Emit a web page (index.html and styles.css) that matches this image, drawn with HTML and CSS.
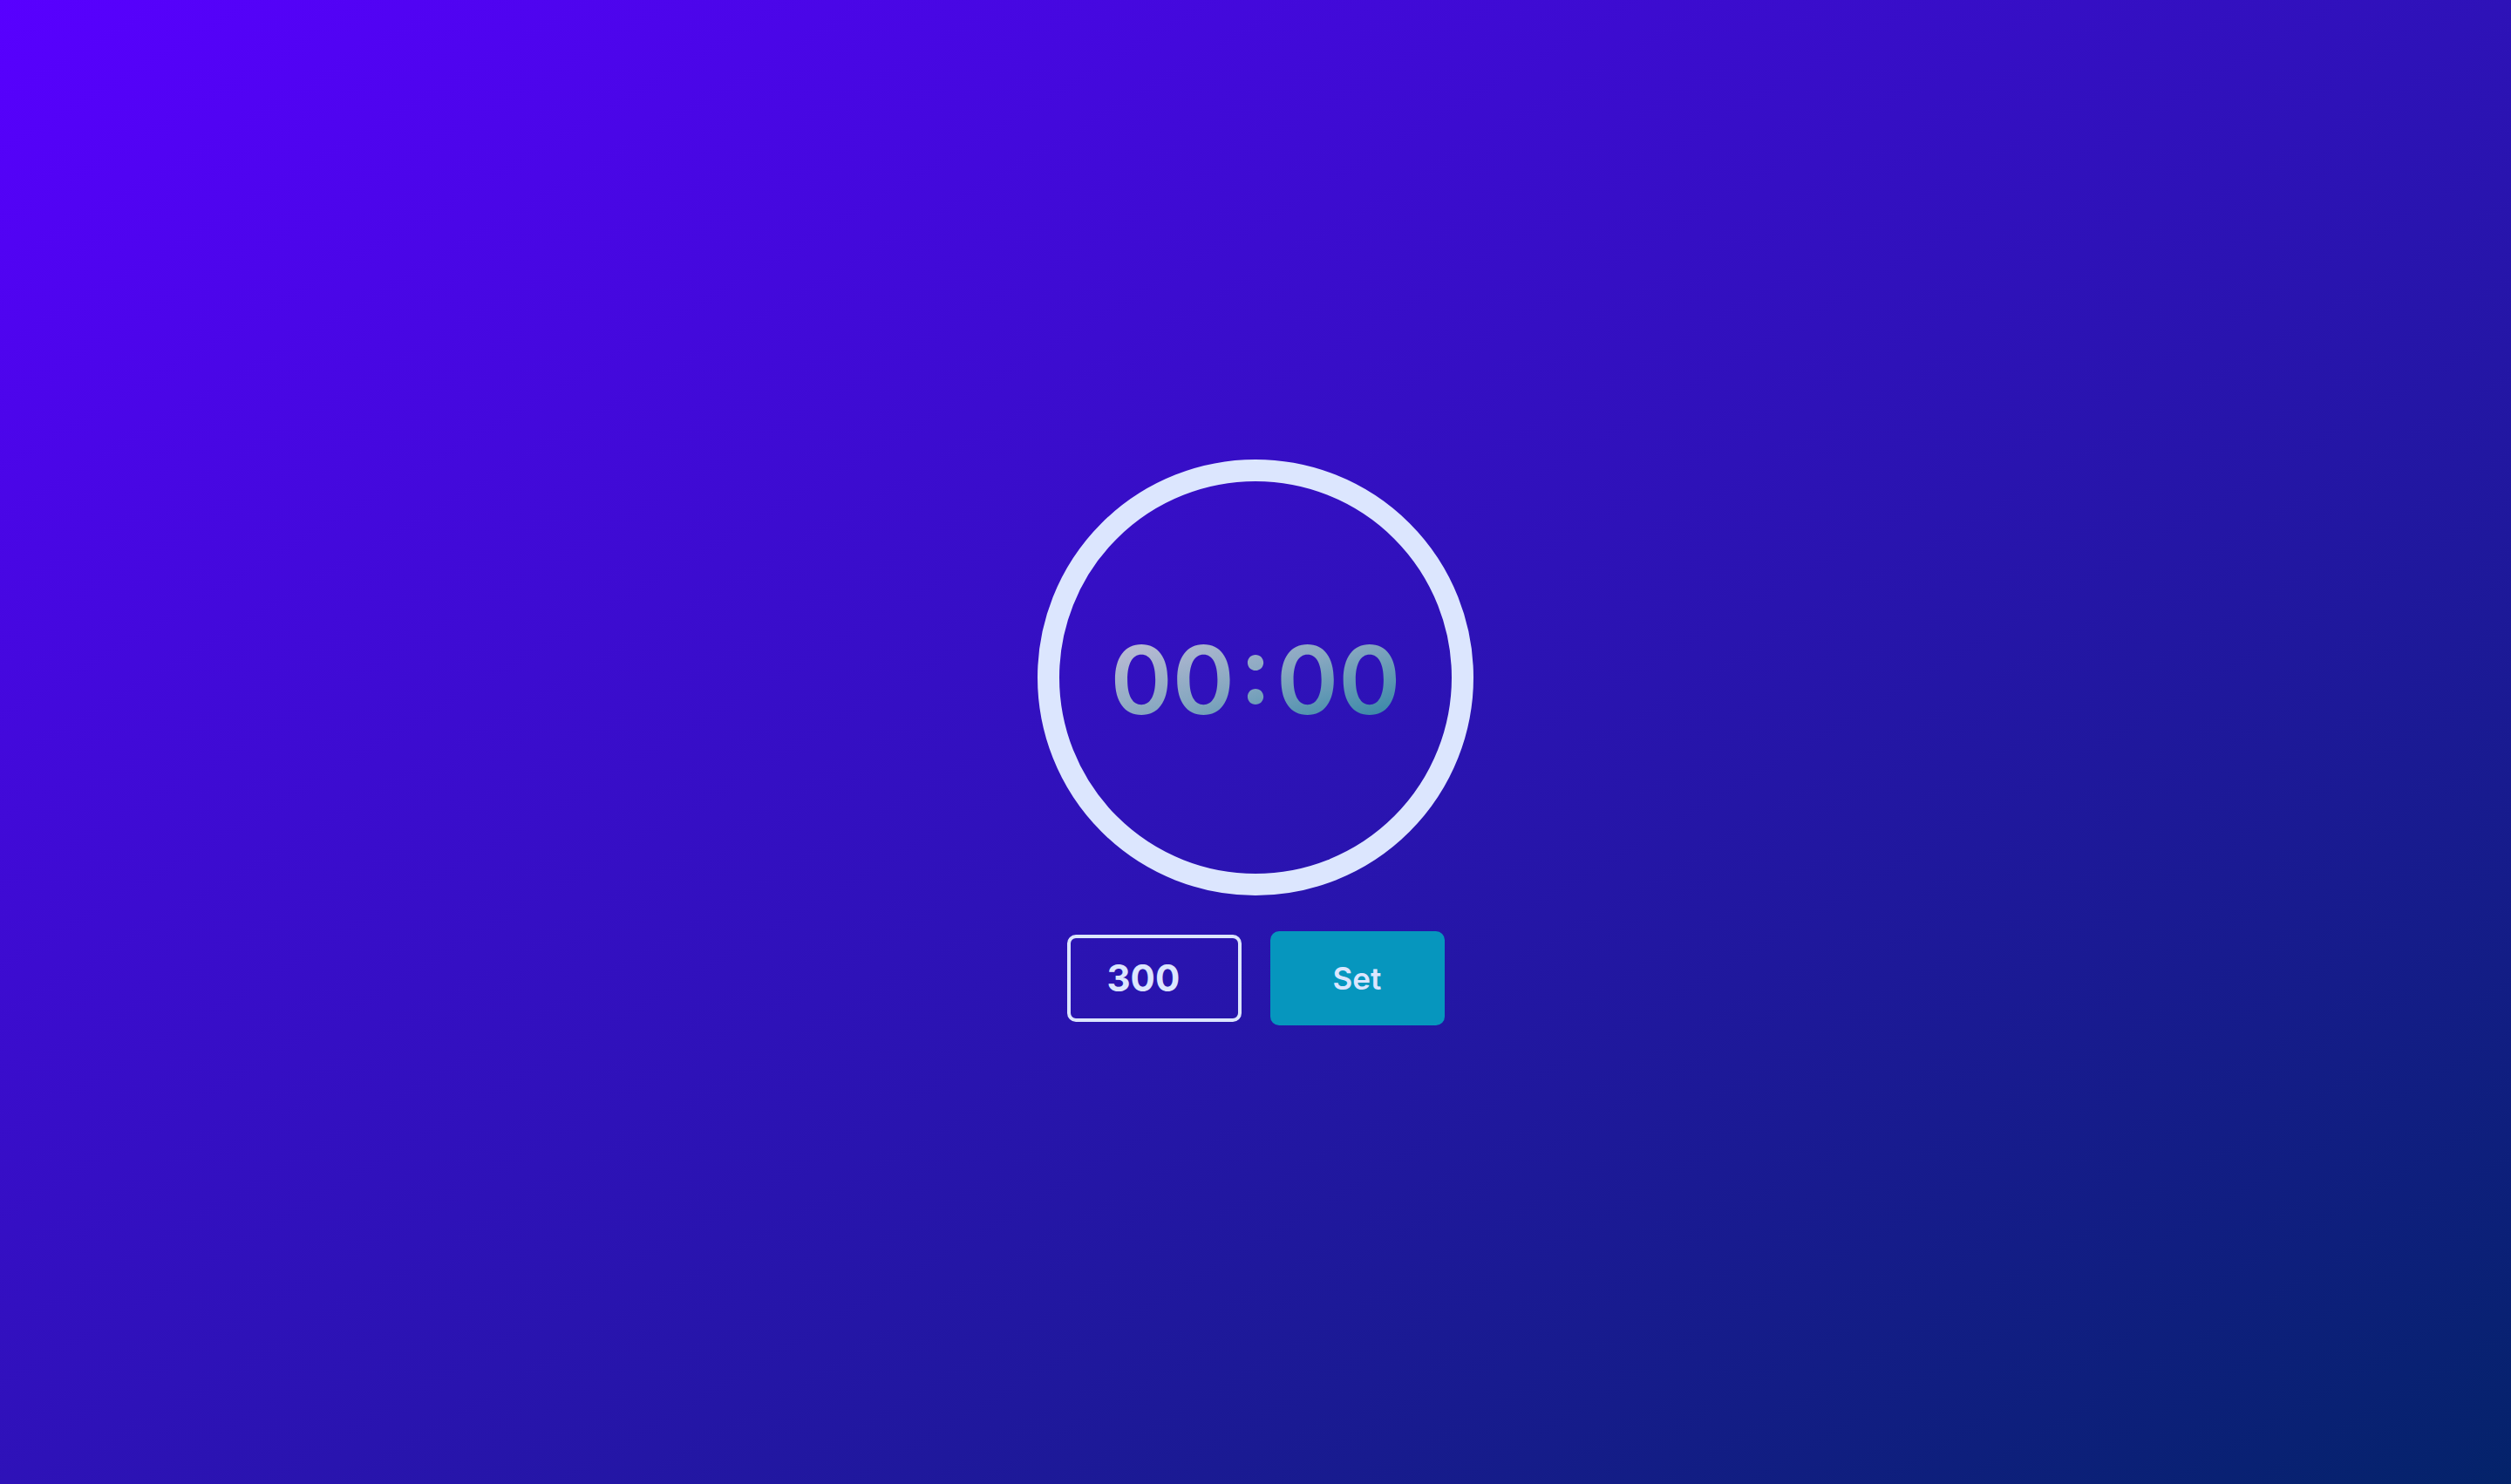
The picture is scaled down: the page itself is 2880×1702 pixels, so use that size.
FILE: index.html
```html
<!DOCTYPE html>
<html lang="en">
<head>
<meta charset="utf-8">
<title>Timer</title>
<link rel="stylesheet" href="styles.css">
</head>
<body>
<main class="timer">
  <div class="ring">
    <div class="time">00<span class="colon">:</span>00</div>
  </div>
  <form class="controls">
    <input class="seconds" type="text" value="300">
    <button class="set" type="button">Set</button>
  </form>
</main>
</body>
</html>
```
FILE: styles.css
```css
html, body {
  margin: 0;
  padding: 0;
  height: 100%;
}
body {
  background: linear-gradient(to bottom right, #5800ff 0%, #2e12b8 50%, #04236a 100%);
  font-family: Inter, "Open Sans", "Liberation Sans", sans-serif;
}
.timer {
  height: 100%;
  display: flex;
  flex-direction: column;
  align-items: center;
  justify-content: center;
  gap: 41px;
}
.ring {
  width: 500px;
  height: 500px;
  box-sizing: border-box;
  border: 25px solid #dce6fe;
  border-radius: 50%;
  display: flex;
  align-items: center;
  justify-content: center;
}
.time {
  font-family: Inter, "Open Sans", sans-serif;
  font-size: 108px;
  font-weight: 600;
  line-height: 1;
  font-feature-settings: "case" 1;
  margin-top: 6px;
  background: linear-gradient(to bottom right, #c6c0d9 0%, #86a7c0 50%, #2a82a3 100%);
  -webkit-background-clip: text;
  background-clip: text;
  color: transparent;
}
.colon {
  margin: 0 6px;
  font-weight: 700;
}
.controls {
  display: flex;
  align-items: center;
  gap: 33px;
  margin: 0;
}
.seconds {
  width: 200px;
  height: 100px;
  box-sizing: border-box;
  border: 4px solid #dce6fe;
  border-radius: 10px;
  background: transparent;
  color: #dce6fe;
  font-family: Inter, "Open Sans", sans-serif;
  font-size: 42px;
  font-weight: 700;
  padding: 0 0 0 42px;
  outline: none;
}
.set {
  width: 200px;
  height: 108px;
  border: none;
  border-radius: 10px;
  background: #0696be;
  color: #dce6fe;
  font-family: Inter, "Open Sans", sans-serif;
  font-size: 35px;
  font-weight: 600;
  padding: 0;
}
```
